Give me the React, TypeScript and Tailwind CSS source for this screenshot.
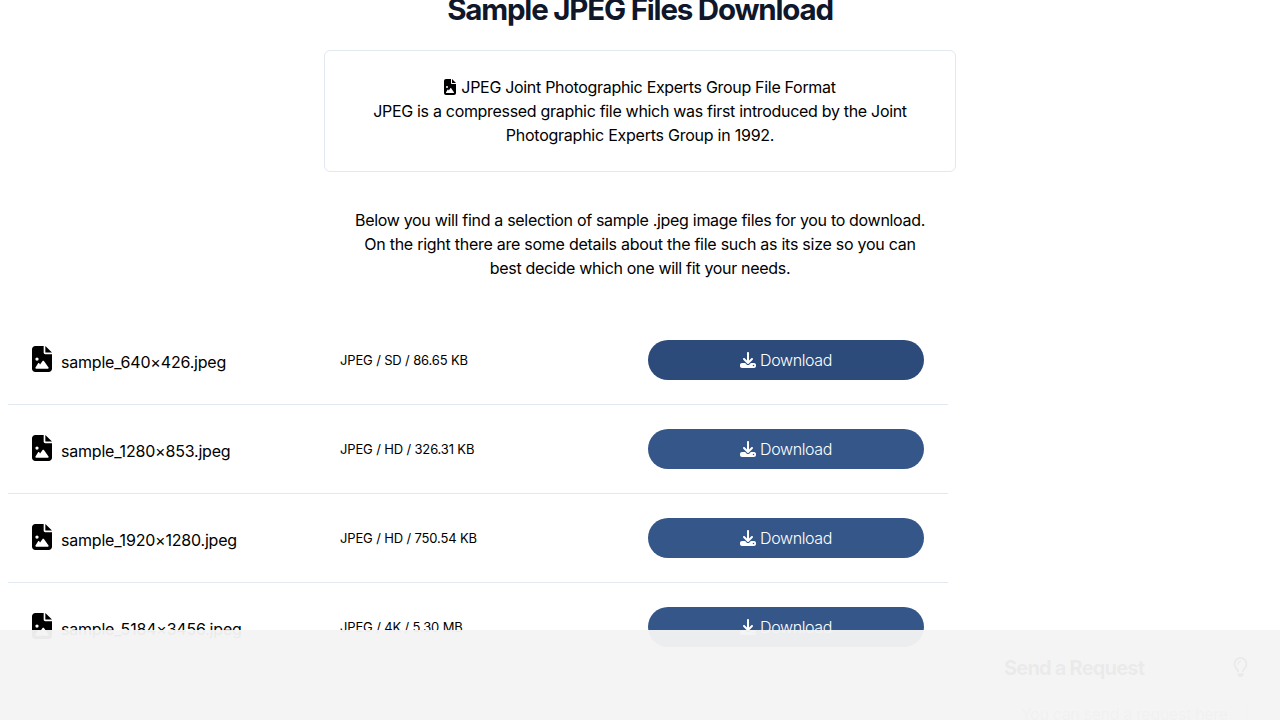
import { FaFileImage, FaDownload, FaRegLightbulb } from "react-icons/fa6";

type Sample = { name: string; details: string; active?: boolean };

const samples: Sample[] = [
  { name: "sample_640×426.jpeg", details: "JPEG / SD / 86.65 KB", active: true },
  { name: "sample_1280×853.jpeg", details: "JPEG / HD / 326.31 KB" },
  { name: "sample_1920×1280.jpeg", details: "JPEG / HD / 750.54 KB" },
  { name: "sample_5184×3456.jpeg", details: "JPEG / 4K / 5.30 MB" },
];

function SampleRow({ name, details, active }: Sample) {
  return (
    <li className="flex h-[89px] items-center border-b border-slate-200 pl-6 pr-6">
      <div className="flex w-[308px] items-center">
        <FaFileImage className="-mt-[3px] h-[26px] w-5 shrink-0" preserveAspectRatio="none" />
        <span className="ml-[9px] mt-1 leading-6 tracking-[-0.2px]">{name}</span>
      </div>
      <div className="w-[308px] text-[13px] leading-5 tracking-[-0.15px]">{details}</div>
      <button
        className={
          active
            ? "flex h-10 w-[276px] items-center justify-center gap-1 rounded-full bg-[#2c4b7a] text-white"
            : "flex h-10 w-[276px] items-center justify-center gap-1 rounded-full bg-[#345688] text-white"
        }
      >
        <FaDownload className="size-4" />
        <span className="font-[350] tracking-[-0.37px]">Download</span>
      </button>
    </li>
  );
}

export default function App() {
  return (
    <div className="relative h-[720px] w-[1280px] overflow-hidden bg-white font-['Inter',sans-serif] text-base tracking-[-0.31px] text-black">
      <h1 className="-mt-[9px] text-center text-[29.5px] font-bold leading-9 tracking-[-1.2px] text-slate-900">
        Sample JPEG Files Download
      </h1>
      <section className="mx-auto mt-[23px] h-[122px] w-[632px] rounded-md border border-slate-200 pt-6 text-center leading-6">
        <p className="flex items-center justify-center gap-[5px]">
          <FaFileImage className="h-4 w-3" />
          <span>JPEG Joint Photographic Experts Group File Format</span>
        </p>
        <p>
          JPEG is a compressed graphic file which was first introduced by the Joint
          <br />
          <span className="tracking-[-0.24px]">Photographic Experts Group in 1992.</span>
        </p>
      </section>
      <p className="mt-9 text-center leading-6">
        Below you will find a selection of sample .jpeg image files for you to download.
        <br />
        <span className="tracking-[-0.26px]">On the right there are some details about the file such as its size so you can</span>
        <br />
        best decide which one will fit your needs.
      </p>
      <main className="mt-9 flex">
        <ul className="ml-2 w-[940px]">
          {samples.map((s) => (
            <SampleRow key={s.name} {...s} />
          ))}
        </ul>
        <aside className="ml-14 mt-[338px] w-[244px]">
          <div className="flex h-7 items-center justify-between">
            <h2 className="text-xl font-bold tracking-[-0.8px]">Send a Request</h2>
            <FaRegLightbulb className="-mt-0.5 h-5 w-[15px]" />
          </div>
          <div className="mt-3 h-12 whitespace-nowrap rounded-md border border-slate-200 pl-4 pt-[7px] tracking-[-0.35px] text-gray-400">
            You can send a request here
          </div>
        </aside>
      </main>
      <div className="absolute inset-x-0 bottom-0 h-[90px] bg-[#f4f4f4]/96" />
    </div>
  );
}
